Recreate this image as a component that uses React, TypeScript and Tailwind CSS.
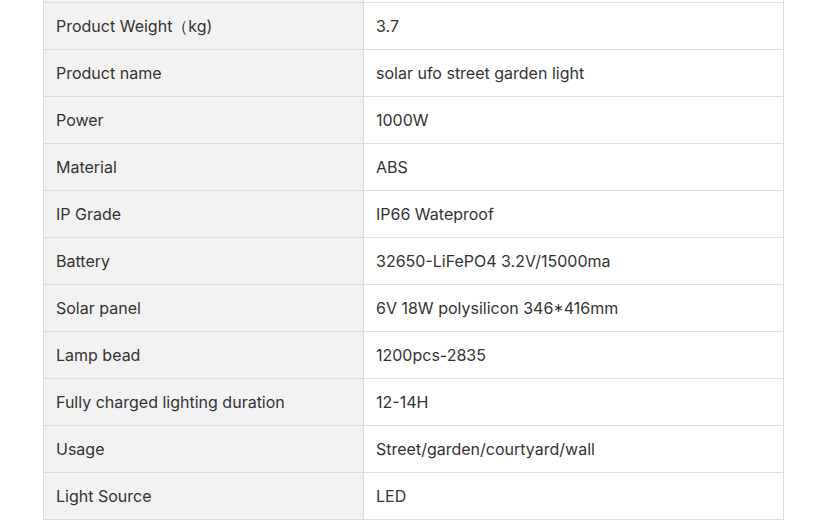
import React from "react";

const rows: [string, string][] = [
  ["", ""],
  ["Product Weight（kg)", "3.7"],
  ["Product name", "solar ufo street garden light"],
  ["Power", "1000W"],
  ["Material", "ABS"],
  ["IP Grade", "IP66 Wateproof"],
  ["Battery", "32650-LiFePO4 3.2V/15000ma"],
  ["Solar panel", "6V 18W polysilicon 346*416mm"],
  ["Lamp bead", "1200pcs-2835"],
  ["Fully charged lighting duration", "12-14H"],
  ["Usage", "Street/garden/courtyard/wall"],
  ["Light Source", "LED"],
];

export default function App() {
  return (
    <div className="w-[840px] h-[523px] overflow-hidden bg-white" style={{ fontFamily: "Inter, 'Noto Sans', sans-serif" }}>
      <div className="pl-[43px] mt-[-45px]">
        <table className="border-collapse w-[741px] text-[16px] text-[#333]">
          <tbody>
            {rows.map(([k, v], i) => (
              <tr key={i} className="h-[47px]">
                <td className="w-[320px] border border-[#dddddd] bg-[#f2f2f2] px-3 align-middle">{k}</td>
                <td className="border border-[#dddddd] bg-white px-3 align-middle">{v}</td>
              </tr>
            ))}
          </tbody>
        </table>
      </div>
    </div>
  );
}
